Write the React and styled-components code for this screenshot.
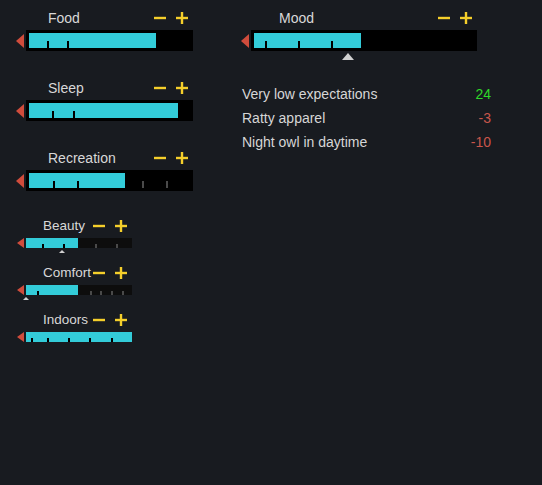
import React from "react";
import styled, { createGlobalStyle } from "styled-components";

const GlobalStyle = createGlobalStyle`
  html, body {
    margin: 0;
    padding: 0;
    background: #181b20;
  }
  body {
    font-family: "Liberation Sans", Arial, sans-serif;
    color: #d6d6d6;
  }
`;

const Page = styled.div`
  width: 542px;
  height: 485px;
  box-sizing: border-box;
  padding: 6px 0 0 16px;
  display: flex;
  align-items: flex-start;
  background: #181b20;
  overflow: hidden;
`;

const LeftColumn = styled.div`
  display: flex;
  flex-direction: column;
  width: 177px;
`;

const LargeGroup = styled.div`
  display: flex;
  flex-direction: column;
  gap: 25px;
  margin-bottom: 23px;
`;

const SmallGroup = styled.div`
  display: flex;
  flex-direction: column;
`;

const RightColumn = styled.div`
  display: flex;
  flex-direction: column;
  width: 250px;
  margin-left: 48px;
`;

const NeedBlock = styled.div`
  display: flex;
  flex-direction: column;
  width: ${(p) => p.$width}px;
  padding-bottom: ${(p) => p.$bottom || 0}px;
`;

const Header = styled.div`
  display: flex;
  align-items: center;
  justify-content: space-between;
  height: 24px;
  padding-left: ${(p) => p.$indent}px;
  padding-right: 5px;
`;

const Label = styled.span`
  font-size: ${(p) => (p.$small ? 13.5 : 14)}px;
  color: #d8d8d8;
  line-height: 1;
  white-space: nowrap;
`;

const Buttons = styled.div`
  display: flex;
  align-items: center;
  gap: 10px;
`;

const BarRow = styled.div`
  display: flex;
  align-items: center;
  gap: 2px;
`;

const Arrow = styled.div`
  width: 0;
  height: 0;
  margin-left: ${(p) => (p.$small ? 1 : 0)}px;
  border-style: solid;
  border-color: transparent #cf4c3c transparent transparent;
  border-width: ${(p) => (p.$small ? "5px 7px 5px 0" : "7px 8px 7px 0")};
`;

const Track = styled.div`
  position: relative;
  flex: 1;
  height: ${(p) => (p.$small ? 10 : 21)}px;
  box-sizing: border-box;
  padding: ${(p) => (p.$small ? 0 : 3)}px;
  background: ${(p) => (p.$small ? "#0d0d0d" : "#000")};
`;

const Inner = styled.div`
  position: relative;
  width: 100%;
  height: 100%;
`;

const Fill = styled.div`
  height: 100%;
  background: #33ccd9;
`;

const Tick = styled.div`
  position: absolute;
  bottom: 0;
  width: 2px;
  height: ${(p) => (p.$small ? 4 : 7)}px;
  background: ${(p) => (p.$filled ? "#000" : "#4a4a4a")};
`;

const Marker = styled.div`
  position: absolute;
  top: 100%;
  margin-top: ${(p) => (p.$small ? 2 : 2)}px;
  width: 0;
  height: 0;
  transform: translateX(-50%);
  border-style: solid;
  border-color: transparent transparent #d0d0d0 transparent;
  border-width: ${(p) => (p.$small ? "0 3px 3px 3px" : "0 6px 7px 6px")};
`;

const Thoughts = styled.div`
  display: flex;
  flex-direction: column;
  margin-top: 31px;
  padding-left: 1px;
`;

const ThoughtRow = styled.div`
  display: flex;
  justify-content: space-between;
  height: 24px;
  line-height: 24px;
  font-size: 14px;
`;

const ThoughtText = styled.span`
  color: #d6d6d6;
`;

const ThoughtValue = styled.span`
  color: ${(p) => (p.$positive ? "#2fd82a" : "#c9564b")};
`;

const Minus = () => (
  <svg width="12" height="12" viewBox="0 0 12 12">
    <rect x="0" y="4.8" width="12" height="2.4" fill="#f5cf2b" />
  </svg>
);

const Plus = () => (
  <svg width="12" height="12" viewBox="0 0 12 12">
    <rect x="0" y="4.8" width="12" height="2.4" fill="#f5cf2b" />
    <rect x="4.8" y="0" width="2.4" height="12" fill="#f5cf2b" />
  </svg>
);

function Need({ name, small, width, indent, fill, ticks, marker, bottom }) {
  return (
    <NeedBlock $width={width} $bottom={bottom}>
      <Header $indent={indent}>
        <Label $small={small}>{name}</Label>
        <Buttons>
          <Minus />
          <Plus />
        </Buttons>
      </Header>
      <BarRow>
        <Arrow $small={small} />
        <Track $small={small}>
          <Inner>
            <Fill style={{ width: `${fill}px` }} />
            {ticks.map((t) => (
              <Tick key={t} $small={small} $filled={t < fill} style={{ left: `${t}px` }} />
            ))}
          </Inner>
          {marker !== undefined && (
            <Marker $small={small} style={{ left: `${marker}px` }} />
          )}
        </Track>
      </BarRow>
    </NeedBlock>
  );
}

const largeNeeds = [
  { name: "Food", fill: 127, ticks: [18, 38] },
  { name: "Sleep", fill: 149, ticks: [23, 44] },
  { name: "Recreation", fill: 96, ticks: [24, 48, 113, 137] },
];

const smallNeeds = [
  { name: "Beauty", fill: 52, ticks: [16, 37, 69, 90], marker: 36 },
  { name: "Comfort", fill: 52, ticks: [11, 64, 74, 85, 96], marker: 0 },
  { name: "Indoors", fill: 106, ticks: [5, 21, 42, 63, 85] },
];

const thoughts = [
  { text: "Very low expectations", value: "24", positive: true },
  { text: "Ratty apparel", value: "-3" },
  { text: "Night owl in daytime", value: "-10" },
];

export default function App() {
  return (
    <>
      <GlobalStyle />
      <Page>
        <LeftColumn>
          <LargeGroup>
            {largeNeeds.map((n) => (
              <Need key={n.name} {...n} width={177} indent={32} />
            ))}
          </LargeGroup>
          <SmallGroup>
            {smallNeeds.map((n) => (
              <Need key={n.name} {...n} small width={116} indent={27} bottom={13} />
            ))}
          </SmallGroup>
        </LeftColumn>
        <RightColumn>
          <Need
            name="Mood"
            width={236}
            indent={38}
            fill={107}
            ticks={[11, 44, 77]}
            marker={97}
          />
          <Thoughts>
            {thoughts.map((t) => (
              <ThoughtRow key={t.text}>
                <ThoughtText>{t.text}</ThoughtText>
                <ThoughtValue $positive={t.positive}>{t.value}</ThoughtValue>
              </ThoughtRow>
            ))}
          </Thoughts>
        </RightColumn>
      </Page>
    </>
  );
}
